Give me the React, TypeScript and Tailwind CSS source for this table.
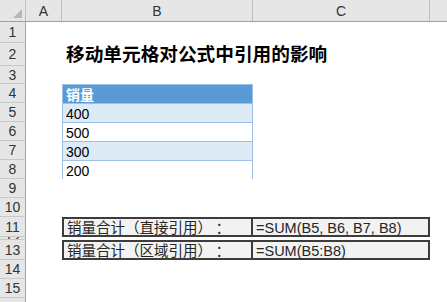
import React from "react";

const font = { fontFamily: '"Liberation Sans", "Noto Sans CJK SC", sans-serif' };
const centeredPunct = { fontFamily: '"Noto Sans CJK TC", sans-serif' };

// row number -> height in px
const rowHeights: [string, number][] = [
  ["1", 21],
  ["2", 23],
  ["3", 18],
  ["4", 19],
  ["5", 19],
  ["6", 19],
  ["7", 19],
  ["8", 19],
  ["9", 19],
  ["10", 19],
  ["11", 20],
  ["12", 3],
  ["13", 20],
  ["14", 19],
  ["15", 19],
  ["16", 19],
];

function RowHead({ label, h }: { label: string; h: number }) {
  return (
    <div
      className="flex w-[26px] shrink-0 items-center justify-center overflow-hidden border-b border-r border-b-[#c8c8c8] border-r-[#a3a3a3] bg-[#e6e6e6] text-[14px] leading-none text-[#333]"
      style={{ height: h }}
    >
      {label}
    </div>
  );
}

function TableRow({ text, tone }: { text: string; tone: "head" | "band" | "plain" }) {
  const cls =
    tone === "head"
      ? "bg-[#5b9bd5] font-bold text-white border-t border-[#9bc2e6]"
      : tone === "band"
        ? "bg-[#ddebf7] text-black border-t border-[#9bc2e6]"
        : "bg-white text-black border-t border-[#9bc2e6]";
  return (
    <div className={`flex h-full w-[191px] shrink-0 items-end border-x border-x-[#9bc2e6] pb-[1px] pl-[3px] text-[14px] leading-none ${cls}`}>
      {text}
    </div>
  );
}

function SumBox({ label, formula }: { label: string; formula: string }) {
  return (
    <div className="flex h-full w-[368px] border-2 border-[#3c3c3c] bg-[#f2f2f2] text-[14.5px] leading-none text-[#262626]">
      <div className="flex w-[189px] shrink-0 items-center border-r-2 border-[#3c3c3c] pl-[3px] pt-[2px] whitespace-nowrap">
        {label}
        <span style={centeredPunct}>：</span>
      </div>
      <div className="flex min-w-0 flex-1 items-center pl-[3px] pt-[2px] whitespace-nowrap">{formula}</div>
    </div>
  );
}

export default function App() {
  const body = (n: string) => {
    switch (n) {
      case "2":
        return (
          <div className="flex h-full items-center pl-[4px] pt-[1px] text-[18.67px] font-bold leading-none text-black whitespace-nowrap">
            移动单元格对公式中引用的影响
          </div>
        );
      case "4":
        return <TableRow text="销量" tone="head" />;
      case "5":
        return <TableRow text="400" tone="band" />;
      case "6":
        return <TableRow text="500" tone="plain" />;
      case "7":
        return <TableRow text="300" tone="band" />;
      case "8":
        return <TableRow text="200" tone="plain" />;
      case "11":
        return <SumBox label="销量合计（直接引用）" formula="=SUM(B5, B6, B7, B8)" />;
      case "13":
        return <SumBox label="销量合计（区域引用）" formula="=SUM(B5:B8)" />;
      default:
        return null;
    }
  };

  return (
    <div className="h-[302px] w-[447px] overflow-hidden bg-white" style={font}>
      {/* column header strip */}
      <div className="flex h-[22px] border-b border-[#9f9f9f] bg-[#e6e6e6] text-[14px] leading-none text-[#333]">
        <div className="relative w-[26px] shrink-0 border-r border-[#c0c0c0]">
          <svg className="absolute left-[12px] top-[8px]" width="11" height="11" viewBox="0 0 11 11">
            <polygon points="1,10 10,10 10,1" fill="#b5b5b5" />
          </svg>
        </div>
        <div className="flex w-[36px] shrink-0 items-end justify-center border-r border-[#bdbdbd] pb-[3px]">A</div>
        <div className="flex w-[191px] shrink-0 items-end justify-center border-r border-[#bdbdbd] pb-[3px]">B</div>
        <div className="flex w-[177px] shrink-0 items-end justify-center border-r border-[#bdbdbd] pb-[3px]">C</div>
        <div className="flex-1" />
      </div>

      {rowHeights.map(([n, h]) => (
        <div key={n} className="flex" style={{ height: h }}>
          <RowHead label={n} h={h} />
          <div className="w-[36px] shrink-0" />
          <div className="min-w-0 flex-1">{body(n)}</div>
        </div>
      ))}
    </div>
  );
}
